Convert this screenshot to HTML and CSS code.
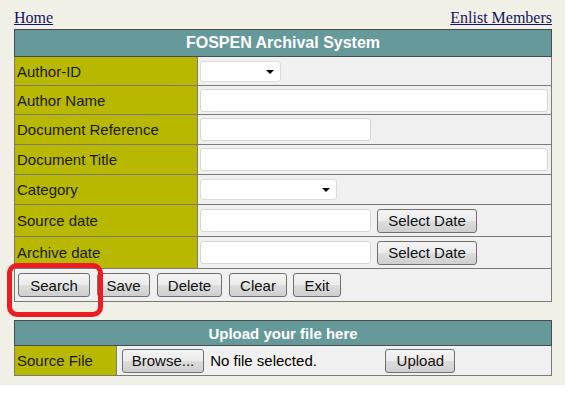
FILE: index.html
```html
<!DOCTYPE html>
<html lang="en">
<head>
  <meta charset="UTF-8" />
  <title>FOSPEN Archival System</title>
  <link rel="stylesheet" href="styles.css">
</head>
<body>
  <div class="page">
    <div class="toplinks">
      <a href="#">Home</a>
      <a href="#">Enlist Members</a>
    </div>

    <table class="grid main">
      <tr><th colspan="2">FOSPEN Archival System</th></tr>
      <tr class="r1">
        <td class="label">Author-ID</td>
        <td><div class="select sel-id"></div></td>
      </tr>
      <tr class="r2">
        <td class="label">Author Name</td>
        <td><input type="text" class="wide"></td>
      </tr>
      <tr class="r3">
        <td class="label">Document Reference</td>
        <td><input type="text" class="short"></td>
      </tr>
      <tr class="r4">
        <td class="label">Document Title</td>
        <td><input type="text" class="wide"></td>
      </tr>
      <tr class="r5">
        <td class="label">Category</td>
        <td><div class="select sel-cat"></div></td>
      </tr>
      <tr class="r6">
        <td class="label">Source date</td>
        <td class="dated"><input type="text" class="short"><button class="btn date">Select Date</button></td>
      </tr>
      <tr class="r7">
        <td class="label">Archive date</td>
        <td class="dated"><input type="text" class="short"><button class="btn date">Select Date</button></td>
      </tr>
      <tr class="actions">
        <td colspan="2">
          <div class="btnbar">
            <button class="btn search">Search</button>
            <button class="btn save">Save</button>
            <button class="btn delete">Delete</button>
            <button class="btn clear">Clear</button>
            <button class="btn exit">Exit</button>
          </div>
        </td>
      </tr>
    </table>

    <table class="grid upload">
      <tr><th colspan="2">Upload your file here</th></tr>
      <tr>
        <td class="label">Source File</td>
        <td class="filerow">
          <button class="btn browse">Browse...</button>
          <span class="nofile">No file selected.</span>
          <button class="btn up">Upload</button>
        </td>
      </tr>
    </table>

    <div class="highlight"></div>
  </div>
</body>
</html>
```

FILE: styles.css
```css
html, body {
  margin: 0;
  background: #fff;
}

.page {
  position: relative;
  width: 565px;
  height: 385px;
  background: #f1f0e7;
  padding: 9px 0 0 0;
  box-sizing: border-box;
  font-family: Arial, "Liberation Sans", sans-serif;
}

.toplinks {
  display: flex;
  justify-content: space-between;
  width: 538px;
  margin-left: 14px;
  font-family: "Times New Roman", "Liberation Serif", serif;
  font-size: 16px;
  line-height: 18px;
  height: 20px;
}

.toplinks a {
  color: #141464;
}

.grid {
  border-collapse: collapse;
  margin-left: 14px;
  width: 538px;
  border: 1px solid #4a4a4a;
  font-size: 15px;
}

.grid th {
  background: #669999;
  color: #fff;
  font-weight: bold;
  text-align: center;
  padding: 0;
  border: 1px solid #4a4a4a;
}

.grid td {
  background: #f0f0f0;
  border: 1px solid #7a7a7a;
  padding: 0 2px;
  vertical-align: middle;
}

.grid td.label {
  background: #b8b800;
  color: #1a1a00;
  width: 178px;
}

.main th { height: 26px; font-size: 16px; }
.r1 td { height: 28px; }
.r2 td { height: 28px; }
.r3 td { height: 29px; }
.r4 td { height: 29px; }
.r5 td { height: 29px; }
.r6 td { height: 31px; }
.r7 td { height: 31px; }
.actions td { height: 32px; }

input[type="text"] {
  height: 23px;
  box-sizing: border-box;
  border: 1px solid #d6d6d6;
  border-radius: 3px;
  background: #fff;
  margin: 0;
  vertical-align: middle;
}

input.wide { width: 348px; }
input.short { width: 171px; }

.select {
  position: relative;
  height: 21px;
  box-sizing: border-box;
  border: 1px solid #dcdcdc;
  border-radius: 3px;
  background: #fff;
}

.select::after {
  content: "";
  position: absolute;
  right: 6px;
  top: 8px;
  border-left: 4px solid transparent;
  border-right: 4px solid transparent;
  border-top: 4px solid #000;
}

.sel-id { width: 81px; }
.sel-cat { width: 137px; }

.dated {
  white-space: nowrap;
}

.btn {
  font-family: Arial, "Liberation Sans", sans-serif;
  font-size: 15px;
  color: #111;
  height: 24px;
  padding: 0 8px;
  border: 1px solid #707070;
  border-radius: 3px;
  background: linear-gradient(#f4f4f4 0%, #ebebeb 48%, #dddddd 52%, #cfcfcf 100%);
  margin: 0;
  vertical-align: middle;
}

.btn.date { width: 100px; margin-left: 6px; }

.actions td { padding-left: 3px; }

.btnbar {
  display: flex;
  gap: 7px;
}

.search { width: 72px; }
.save { width: 53px; }
.delete { width: 65px; }
.clear { width: 58px; }
.exit { width: 48px; margin-left: -1px; }

.upload {
  margin-top: 18px;
}

.upload th { height: 24px; font-size: 15px; }
.upload td { height: 29px; }
.upload td.label { width: 97px; }

.filerow {
  white-space: nowrap;
}

.filerow .browse { width: 82px; margin-left: 3px; }
.nofile { margin-left: 2px; display: inline-block; width: 171px; vertical-align: middle; }
.filerow .up { width: 70px; }

.highlight {
  position: absolute;
  left: 7px;
  top: 263px;
  width: 96px;
  height: 54px;
  box-sizing: border-box;
  border: 5px solid #ec1c24;
  border-radius: 10px;
}
```
